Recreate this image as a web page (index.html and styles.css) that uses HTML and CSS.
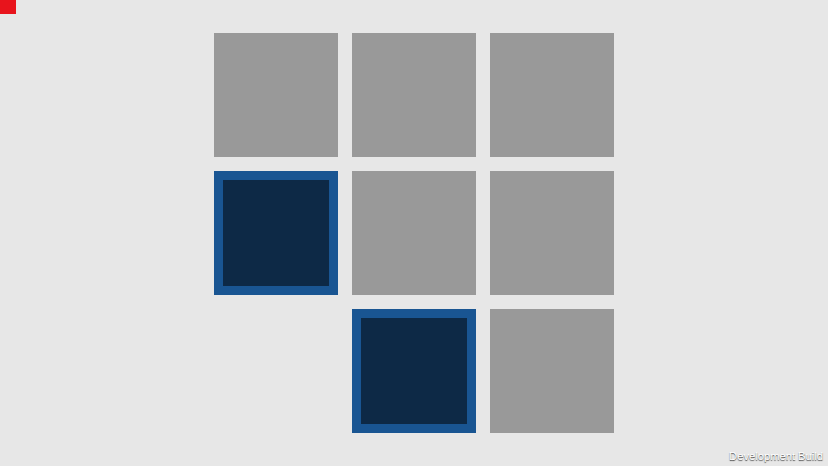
FILE: index.html
```html
<!DOCTYPE html>
<html>
<head>
<meta charset="utf-8">
<link rel="stylesheet" href="styles.css">
</head>
<body>
<div class="screen">
  <div class="corner-mark"></div>
  <div class="board">
    <div class="tile"></div>
    <div class="tile"></div>
    <div class="tile"></div>
    <div class="tile tile-selected"></div>
    <div class="tile"></div>
    <div class="tile"></div>
    <div class="tile tile-empty"></div>
    <div class="tile tile-selected"></div>
    <div class="tile"></div>
  </div>
  <div class="build-label">Development Build</div>
</div>
</body>
</html>
```
FILE: styles.css
```css
html, body {
  margin: 0;
  padding: 0;
  background: #e7e7e7;
}
.screen {
  position: relative;
  width: 828px;
  height: 466px;
  overflow: hidden;
  background: #e7e7e7;
  font-family: "Liberation Sans", Arial, sans-serif;
}
.corner-mark {
  position: absolute;
  left: 0;
  top: 0;
  width: 16px;
  height: 14px;
  background: #e8141c;
}
.board {
  display: grid;
  grid-template-columns: repeat(3, 124px);
  grid-auto-rows: 124px;
  gap: 14px;
  padding: 33px 0 0 214px;
}
.tile {
  background: #999999;
  box-sizing: border-box;
}
.tile-selected {
  background: #0d2946;
  border: 9px solid #195592;
}
.tile-empty {
  background: transparent;
}
.build-label {
  position: absolute;
  right: 5px;
  bottom: 4px;
  font-size: 11.2px;
  color: #ffffff;
  text-shadow: 0 1px 1px rgba(0,0,0,0.7);
}
```
